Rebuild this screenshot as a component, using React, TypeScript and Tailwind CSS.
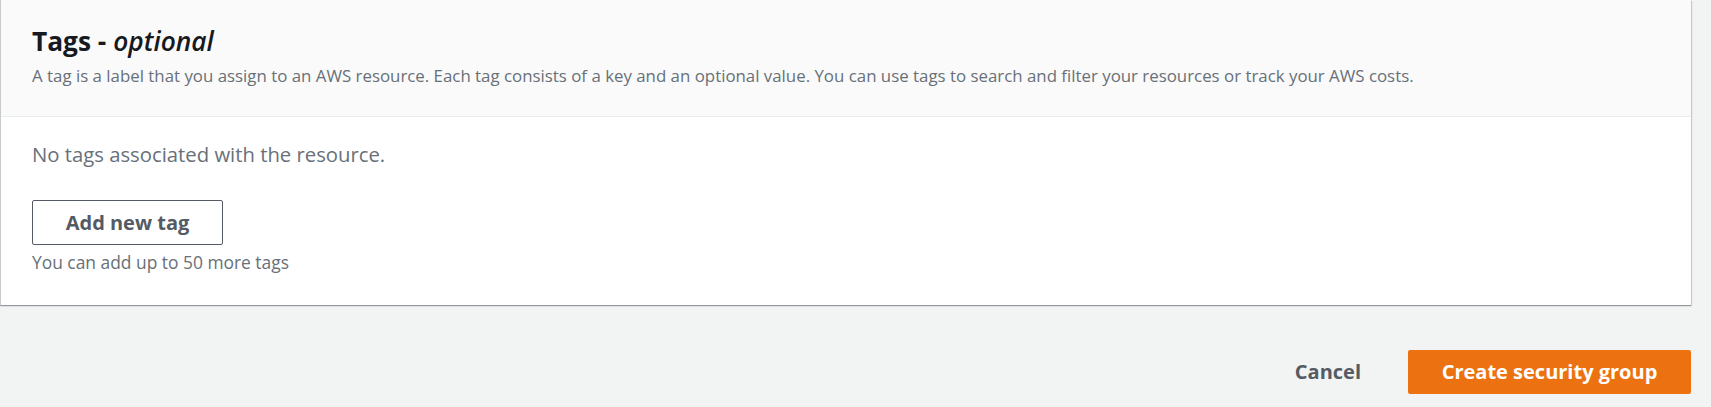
export default function App() {
  return (
    <div className="h-[407px] w-full overflow-hidden bg-[#f2f3f3] font-['Open_Sans',sans-serif]">
      {/* Tags card */}
      <div className="mr-[20px] border-l border-[#c6cccd] bg-white shadow-[0_1px_1px_0_rgba(0,28,36,0.3),1px_1px_1px_0_rgba(0,28,36,0.15)]">
        <div className="h-[117px] border-b border-[#eaeded] bg-[#fafafa] px-[31px] pt-[25px]">
          <h2 className="text-[26.3px] font-bold leading-[32px] text-[#16191f]">
            Tags - <i className="font-semibold">optional</i>
          </h2>
          <p className="mt-[8px] text-[16.85px] leading-[22px] text-[#687078]">
            A tag is a label that you assign to an AWS resource. Each tag consists of a key and an optional value. You can use tags to search and filter your resources or track your AWS costs.
          </p>
        </div>
        <div className="px-[31px] pb-[32px] pt-[24px]">
          <p className="text-[20.3px] leading-[26px] text-[#687078]">No tags associated with the resource.</p>
          <button className="mt-[33px] flex h-[45px] w-[191px] items-center justify-center rounded-[2px] border border-[#545b64] bg-white text-[20px] font-bold text-[#545b64]">
            Add new tag
          </button>
          <p className="mt-[6px] text-[17.4px] leading-[22px] text-[#687078]">You can add up to 50 more tags</p>
        </div>
      </div>

      {/* Footer actions */}
      <div className="mr-[20px] flex items-center justify-end gap-[47px] pt-[45px]">
        <button className="text-[20px] font-bold text-[#545b64]">Cancel</button>
        <button className="flex h-[44px] w-[283px] items-center justify-center rounded-[2px] bg-[#ec7211] text-[20px] font-bold text-white">
          Create security group
        </button>
      </div>
    </div>
  )
}
